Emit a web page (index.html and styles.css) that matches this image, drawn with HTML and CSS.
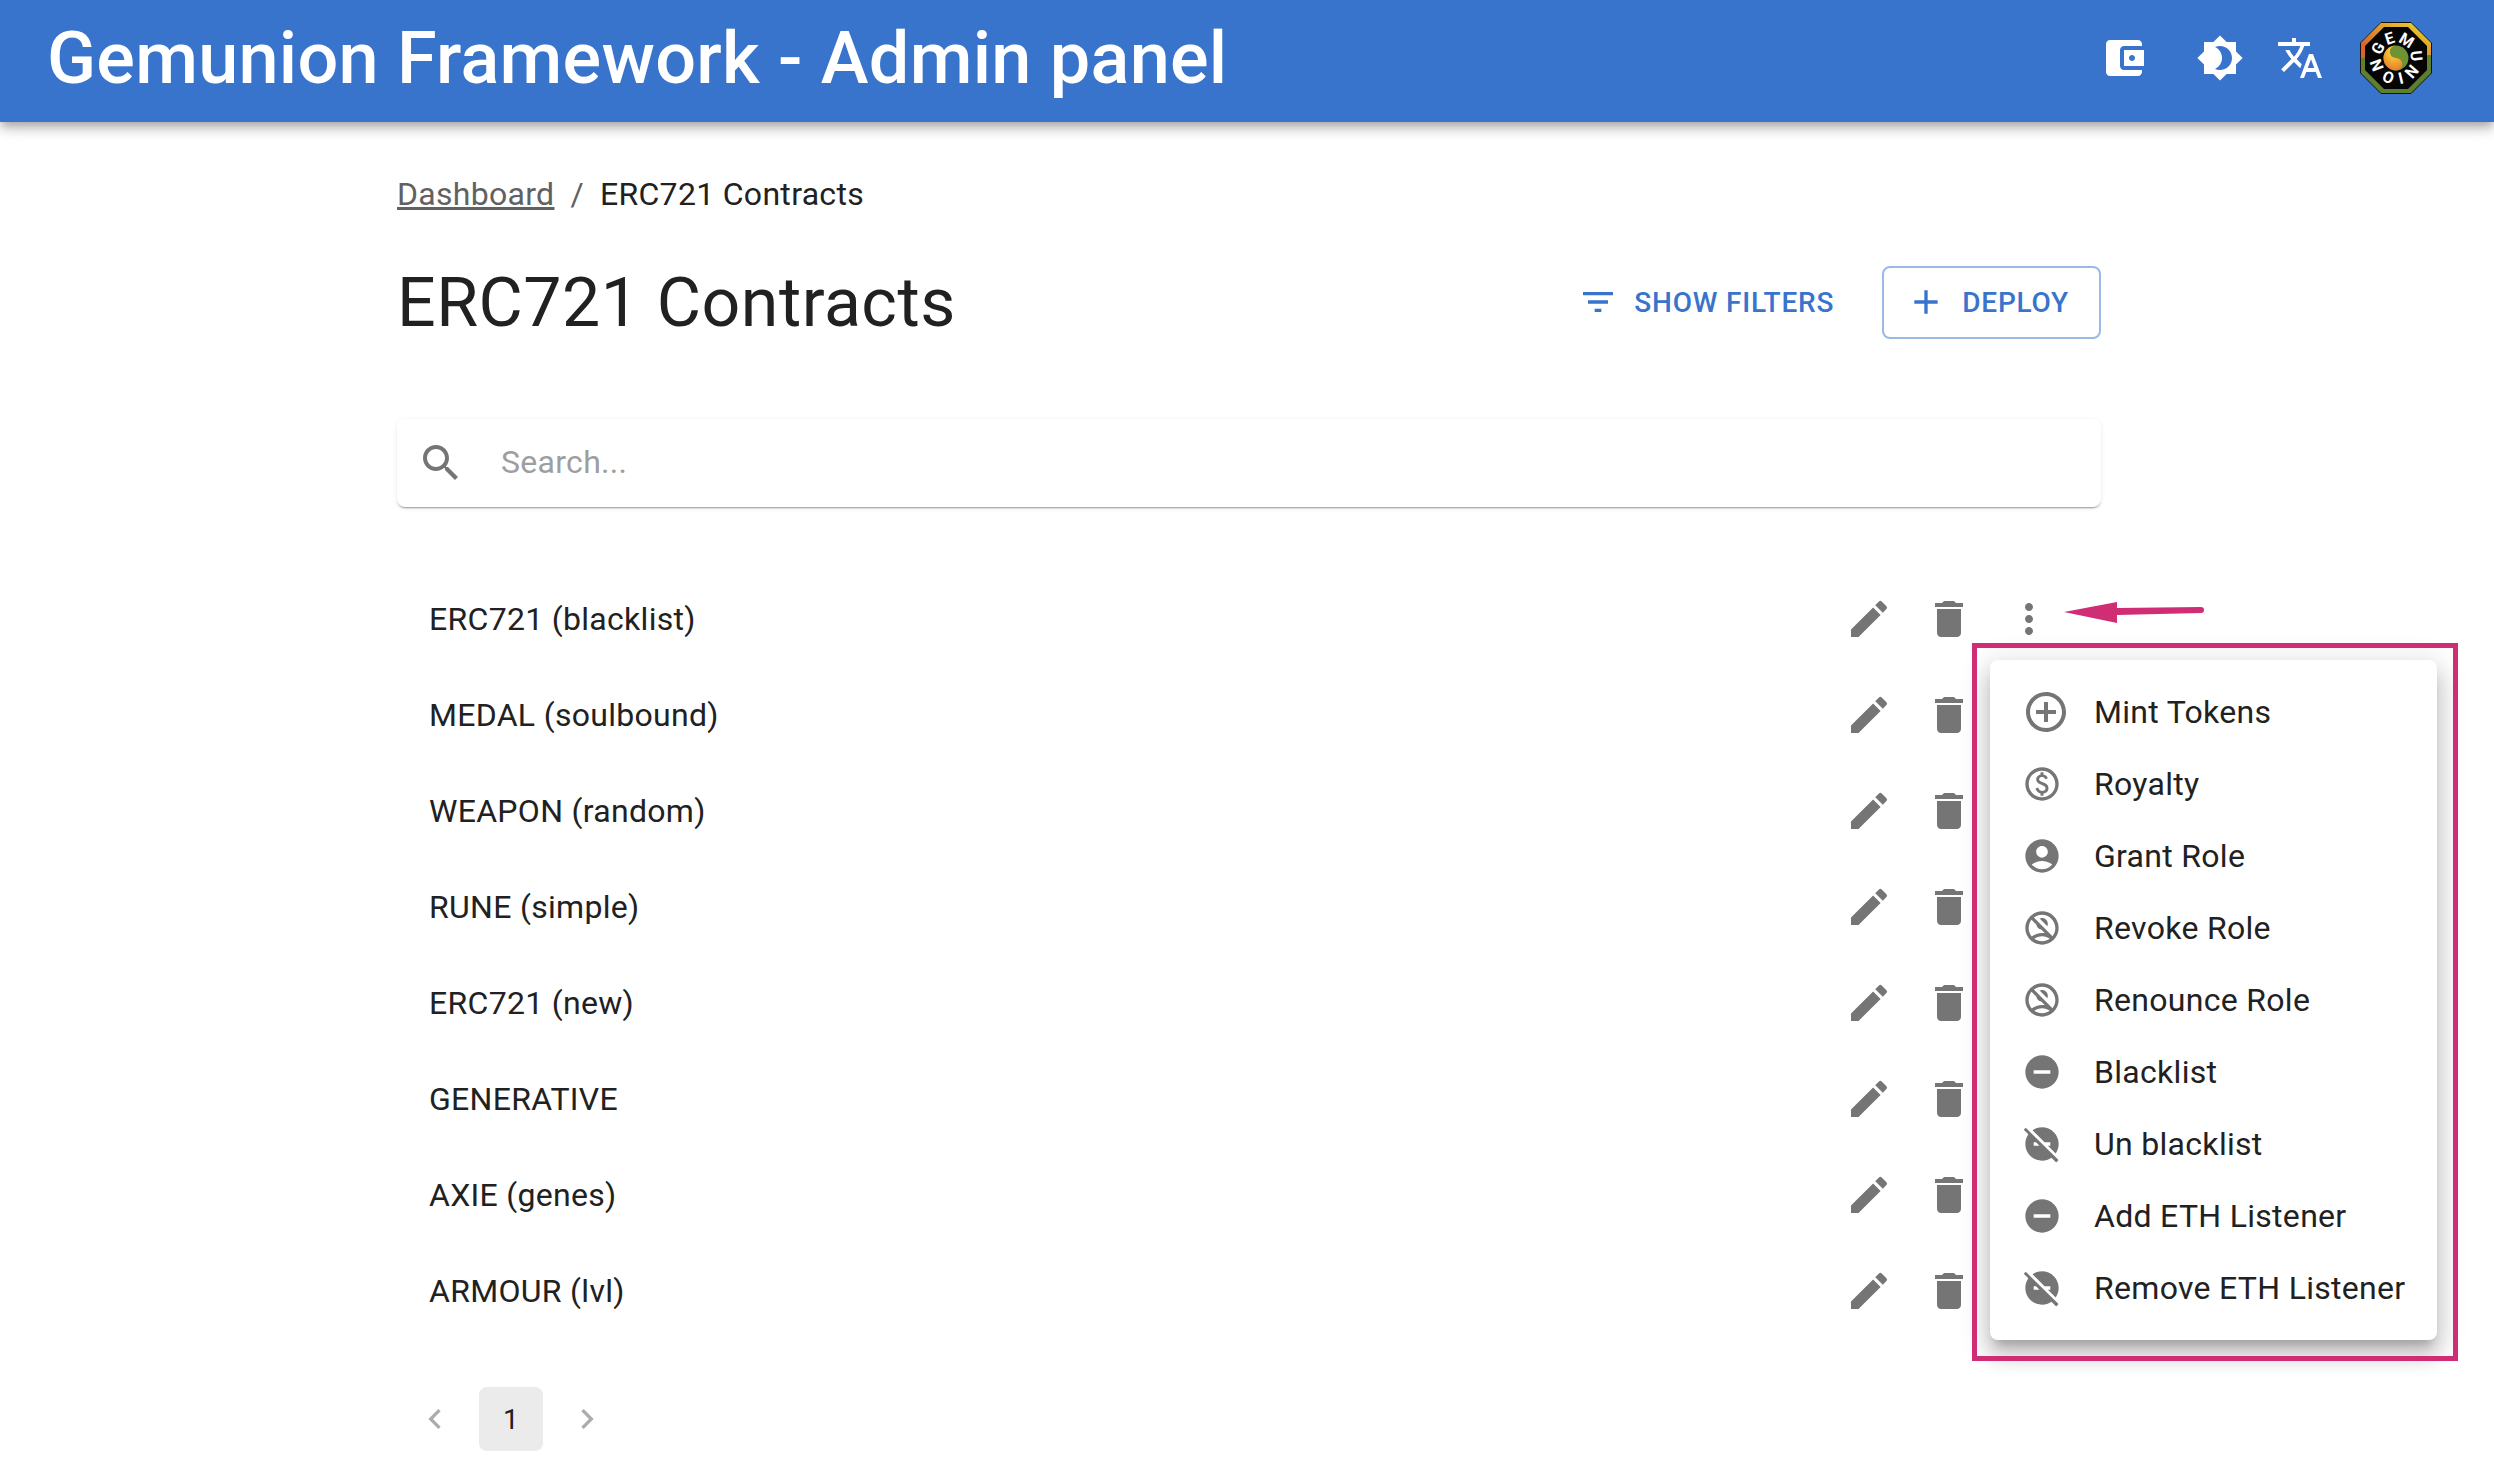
FILE: index.html
```html
<!DOCTYPE html>
<html lang="en">
<head>
  <meta charset="UTF-8" />
  <title>Gemunion Framework - Admin panel</title>
  <link rel="stylesheet" href="styles.css">
</head>
<body>
  <!--ICONS-->
  <svg class="sprites" width="0" height="0">
    <symbol id="i-wallet" viewBox="0 0 24 24"><path d="M21 18v1c0 1.1-.9 2-2 2H5c-1.11 0-2-.9-2-2V5c0-1.1.89-2 2-2h14c1.1 0 2 .9 2 2v1h-9c-1.11 0-2 .9-2 2v8c0 1.1.89 2 2 2h9zm-9-2h10V8H12v8zm4-2.5c-.83 0-1.5-.67-1.5-1.5s.67-1.5 1.5-1.5 1.5.67 1.5 1.5-.67 1.5-1.5 1.5z"/></symbol>
    <symbol id="i-theme" viewBox="0 0 24 24"><path d="M20 8.69V4h-4.69L12 .69 8.69 4H4v4.69L.69 12 4 15.31V20h4.69L12 23.31 15.31 20H20v-4.69L23.31 12 20 8.69zM12 18c-.89 0-1.74-.2-2.5-.55C11.56 16.5 13 14.42 13 12s-1.44-4.5-3.5-5.45C10.26 6.2 11.11 6 12 6c3.31 0 6 2.69 6 6s-2.69 6-6 6z"/></symbol>
    <symbol id="i-translate" viewBox="0 0 24 24"><path d="m12.87 15.07-2.54-2.51.03-.03c1.74-1.94 2.98-4.17 3.71-6.53H17V4h-7V2H8v2H1v1.99h11.17C11.5 7.92 10.44 9.75 9 11.35 8.07 10.32 7.3 9.19 6.69 8h-2c.73 1.63 1.73 3.17 2.98 4.56l-5.09 5.02L4 19l5-5 3.11 3.11.76-2.04zM18.5 10h-2L12 22h2l1.12-3h4.75L21 22h2l-4.5-12zm-2.62 7 1.62-4.33L19.12 17h-3.24z"/></symbol>
    <symbol id="i-filter" viewBox="0 0 24 24"><path d="M10 18h4v-2h-4v2zM3 6v2h18V6H3zm3 7h12v-2H6v2z"/></symbol>
    <symbol id="i-add" viewBox="0 0 24 24"><path d="M19 13h-6v6h-2v-6H5v-2h6V5h2v6h6v2z"/></symbol>
    <symbol id="i-search" viewBox="0 0 24 24"><path d="M15.5 14h-.79l-.28-.27C15.41 12.59 16 11.11 16 9.5 16 5.91 13.09 3 9.5 3S3 5.91 3 9.5 5.91 16 9.5 16c1.61 0 3.09-.59 4.23-1.57l.27.28v.79l5 4.99L20.49 19l-4.99-5zm-6 0C7.01 14 5 11.99 5 9.5S7.01 5 9.5 5 14 7.01 14 9.5 11.99 14 9.5 14z"/></symbol>
    <symbol id="i-edit" viewBox="0 0 24 24"><path d="M3 17.25V21h3.75L17.81 9.94l-3.75-3.75L3 17.25zM20.71 7.04c.39-.39.39-1.02 0-1.41l-2.34-2.34a.9959.9959 0 0 0-1.41 0l-1.83 1.83 3.75 3.75 1.83-1.83z"/></symbol>
    <symbol id="i-delete" viewBox="0 0 24 24"><path d="M6 19c0 1.1.9 2 2 2h8c1.1 0 2-.9 2-2V7H6v12zM19 4h-3.5l-1-1h-5l-1 1H5v2h14V4z"/></symbol>
    <symbol id="i-more" viewBox="0 0 24 24"><path d="M12 8c1.1 0 2-.9 2-2s-.9-2-2-2-2 .9-2 2 .9 2 2 2zm0 2c-1.1 0-2 .9-2 2s.9 2 2 2 2-.9 2-2-.9-2-2-2zm0 6c-1.1 0-2 .9-2 2s.9 2 2 2 2-.9 2-2-.9-2-2-2z"/></symbol>
    <symbol id="i-mint" viewBox="0 0 24 24"><path d="M13 7h-2v4H7v2h4v4h2v-4h4v-2h-4V7zm-1-5C6.48 2 2 6.48 2 12s4.48 10 10 10 10-4.48 10-10S17.52 2 12 2zm0 18c-4.41 0-8-3.59-8-8s3.59-8 8-8 8 3.59 8 8-3.59 8-8 8z"/></symbol>
    <symbol id="i-paid" viewBox="0 0 24 24"><path d="M12 2C6.48 2 2 6.48 2 12s4.48 10 10 10 10-4.48 10-10S17.52 2 12 2zm0 18c-4.41 0-8-3.59-8-8s3.59-8 8-8 8 3.59 8 8-3.59 8-8 8z"/><path d="M12.89 11.1c-1.78-.59-2.64-.96-2.64-1.9 0-1.02 1.11-1.39 1.81-1.39 1.31 0 1.79.99 1.9 1.34l1.58-.67c-.15-.44-.82-1.91-2.66-2.23V5h-1.75v1.26c-2.6.56-2.62 2.85-2.62 2.96 0 2.27 2.25 2.91 3.35 3.31 1.58.56 2.28 1.07 2.28 2.03 0 1.13-1.05 1.61-1.98 1.61-1.82 0-2.34-1.87-2.4-2.09l-1.66.67c.63 2.19 2.28 2.78 3.02 2.96V19h1.75v-1.24c.52-.09 3.02-.59 3.02-3.22.01-1.39-.62-2.61-3-3.44z"/></symbol>
    <symbol id="i-account" viewBox="0 0 24 24"><path d="M12 2C6.48 2 2 6.48 2 12s4.48 10 10 10 10-4.48 10-10S17.52 2 12 2zm0 4c1.93 0 3.5 1.57 3.5 3.5S13.93 13 12 13s-3.5-1.57-3.5-3.5S10.07 6 12 6zm0 14c-2.03 0-4.43-.82-6.14-2.88C7.55 15.8 9.68 15 12 15s4.45.8 6.14 2.12C16.43 19.18 14.03 20 12 20z"/></symbol>
    <symbol id="i-noaccount" viewBox="0 0 24 24"><path d="M15.18 10.94c.2-.44.32-.92.32-1.44C15.5 7.57 13.93 6 12 6c-.52 0-1 .12-1.44.32l4.62 4.62z"/><path d="M12 2C6.48 2 2 6.48 2 12s4.48 10 10 10 10-4.48 10-10S17.52 2 12 2zM4 12c0-1.85.63-3.55 1.69-4.9l2.86 2.86c.21 1.56 1.43 2.79 2.99 2.99l2.2 2.2c-.57-.1-1.15-.15-1.74-.15-2.32 0-4.45.8-6.14 2.12C4.7 15.73 4 13.95 4 12zm8 8c-1.74 0-3.34-.56-4.65-1.5C8.66 17.56 10.26 17 12 17s3.34.56 4.65 1.5c-1.31.94-2.91 1.5-4.65 1.5zm6.31-3.1L7.1 5.69C8.45 4.63 10.15 4 12 4c4.42 0 8 3.58 8 8 0 1.85-.63 3.55-1.69 4.9z"/></symbol>
    <symbol id="i-minus" viewBox="0 0 24 24"><path d="M12 2C6.48 2 2 6.48 2 12s4.48 10 10 10 10-4.48 10-10S17.52 2 12 2zm5 11H7v-2h10v2z"/></symbol>
    <symbol id="i-minusoff" viewBox="0 0 24 24"><path d="M17 11v2h-1.46l4.68 4.68C21.34 16.07 22 14.11 22 12c0-5.52-4.48-10-10-10-2.11 0-4.07.66-5.68 1.78L13.54 11H17zM2.27 2.27 1.06 3.48l2.72 2.72C2.66 7.93 2 9.89 2 12c0 5.52 4.48 10 10 10 2.11 0 4.07-.66 5.68-1.78l2.84 2.84 1.41-1.41L2.27 2.27zM7 13v-2h1.46l2 2H7z"/></symbol>
    <symbol id="i-prev" viewBox="0 0 24 24"><path d="M15.41 7.41 14 6l-6 6 6 6 1.41-1.41L10.83 12z"/></symbol>
    <symbol id="i-next" viewBox="0 0 24 24"><path d="M10 6 8.59 7.41 13.17 12l-4.58 4.59L10 18l6-6z"/></symbol>
  </svg>

  <header class="appbar">
    <div class="appbar-title">Gemunion Framework - Admin panel</div>
    <svg class="icon wallet"><use href="#i-wallet"/></svg>
    <svg class="icon theme"><use href="#i-theme"/></svg>
    <svg class="icon translate"><use href="#i-translate"/></svg>
    <!--AVATAR-->
    <svg class="avatar" viewBox="0 0 72 72">
      <defs>
        <linearGradient id="ring" x1="0" y1="1" x2="1" y2="0">
          <stop offset="0.2" stop-color="#d9642a"/>
          <stop offset="0.85" stop-color="#e6c52e"/>
        </linearGradient>
        <radialGradient id="yang" cx="0.55" cy="0.2" r="0.85">
          <stop offset="0" stop-color="#ffe13a"/>
          <stop offset="1" stop-color="#e8782a"/>
        </radialGradient>
        <path id="letters" d="M21 36a15 15 0 1 1 30 0a15 15 0 1 1 -30 0"/>
      </defs>
      <polygon points="21,.5 51,.5 71.5,21 71.5,51 51,71.5 21,71.5 .5,51 .5,21" fill="#5d7f2e" stroke="#111"/>
      <polygon points="21,1 51,1 71,21 71,33 1,36 1,21" fill="url(#ring)"/>
      <polygon points="24,5 48,5 67,24 67,48 48,67 24,67 5,48 5,24" fill="#050505"/>
      <circle cx="36" cy="36" r="12.5" fill="#6f9332"/>
      <path d="M36 23.5a12.5 12.5 0 0 0 0 25a6.25 6.25 0 0 0 0-12.5a6.25 6.25 0 0 1 0-12.5z" fill="url(#yang)"/>
      <circle cx="36" cy="29.8" r="1.5" fill="#6f9332"/>
      <circle cx="36" cy="42.2" r="1.5" fill="#e8a02a"/>
      <text class="avatar-text"><textPath href="#letters" startOffset="2" textLength="92">GEMUNION</textPath></text>
    </svg>
  </header>

  <main class="page">
    <nav class="crumbs">
      <a href="#">Dashboard</a>
      <span class="crumb-sep">/</span>
      <span>ERC721 Contracts</span>
    </nav>

    <div class="title-row">
      <h1>ERC721 Contracts</h1>
      <button class="btn btn-text"><svg class="btn-icon"><use href="#i-filter"/></svg>Show filters</button>
      <button class="btn btn-outlined"><svg class="btn-icon"><use href="#i-add"/></svg>Deploy</button>
    </div>

    <div class="search">
      <svg class="icon"><use href="#i-search"/></svg>
      <span class="search-text">Search...</span>
    </div>

    <ul class="contracts">
      <li><span>ERC721 (blacklist)</span><div class="actions"><svg class="icon"><use href="#i-edit"/></svg><svg class="icon"><use href="#i-delete"/></svg><svg class="icon"><use href="#i-more"/></svg></div></li>
      <li><span>MEDAL (soulbound)</span><div class="actions"><svg class="icon"><use href="#i-edit"/></svg><svg class="icon"><use href="#i-delete"/></svg><svg class="icon"><use href="#i-more"/></svg></div></li>
      <li><span>WEAPON (random)</span><div class="actions"><svg class="icon"><use href="#i-edit"/></svg><svg class="icon"><use href="#i-delete"/></svg><svg class="icon"><use href="#i-more"/></svg></div></li>
      <li><span>RUNE (simple)</span><div class="actions"><svg class="icon"><use href="#i-edit"/></svg><svg class="icon"><use href="#i-delete"/></svg><svg class="icon"><use href="#i-more"/></svg></div></li>
      <li><span>ERC721 (new)</span><div class="actions"><svg class="icon"><use href="#i-edit"/></svg><svg class="icon"><use href="#i-delete"/></svg><svg class="icon"><use href="#i-more"/></svg></div></li>
      <li><span>GENERATIVE</span><div class="actions"><svg class="icon"><use href="#i-edit"/></svg><svg class="icon"><use href="#i-delete"/></svg><svg class="icon"><use href="#i-more"/></svg></div></li>
      <li><span>AXIE (genes)</span><div class="actions"><svg class="icon"><use href="#i-edit"/></svg><svg class="icon"><use href="#i-delete"/></svg><svg class="icon"><use href="#i-more"/></svg></div></li>
      <li><span>ARMOUR (lvl)</span><div class="actions"><svg class="icon"><use href="#i-edit"/></svg><svg class="icon"><use href="#i-delete"/></svg><svg class="icon"><use href="#i-more"/></svg></div></li>
    </ul>

    <div class="pager">
      <span class="pager-btn"><svg class="pager-icon"><use href="#i-prev"/></svg></span>
      <span class="pager-btn current">1</span>
      <span class="pager-btn"><svg class="pager-icon"><use href="#i-next"/></svg></span>
    </div>
  </main>

  <!--MENU + MARKS DRAWN OVER THE SCREENSHOT-->
  <ul class="menu">
    <li><svg class="icon"><use href="#i-mint"/></svg><span>Mint Tokens</span></li>
    <li><svg class="icon-sm"><use href="#i-paid"/></svg><span>Royalty</span></li>
    <li><svg class="icon-sm"><use href="#i-account"/></svg><span>Grant Role</span></li>
    <li><svg class="icon-sm"><use href="#i-noaccount"/></svg><span>Revoke Role</span></li>
    <li><svg class="icon-sm"><use href="#i-noaccount"/></svg><span>Renounce Role</span></li>
    <li><svg class="icon-sm"><use href="#i-minus"/></svg><span>Blacklist</span></li>
    <li><svg class="icon-sm"><use href="#i-minusoff"/></svg><span>Un blacklist</span></li>
    <li><svg class="icon-sm"><use href="#i-minus"/></svg><span>Add ETH Listener</span></li>
    <li><svg class="icon-sm"><use href="#i-minusoff"/></svg><span>Remove ETH Listener</span></li>
  </ul>
  <div class="mark-box"></div>
  <svg class="mark-arrow" viewBox="0 0 140 22">
    <path d="M0 11 53 1 53 7 137 6a3 3 0 0 1 0 6L53 14 53 22z"/>
  </svg>
</body>
</html>
```

FILE: styles.css
```css
:root {
  --azul: #3874cb;
  --cinza: #757575;
  --texto: #212121;
  --marca: #cf2e75;
}

* {
  margin: 0;
  padding: 0;
  box-sizing: border-box;
}

html, body {
  height: 100%;
  overflow: hidden;
}

body {
  position: relative;
  font-family: 'Roboto', sans-serif;
  font-size: 32px;
  letter-spacing: 0.3px;
  color: var(--texto);
  background-color: #fff;
}

ul {
  list-style: none;
}

.sprites {
  position: absolute;
}

.icon {
  width: 48px;
  height: 48px;
  fill: var(--cinza);
  flex: none;
}

.icon-sm {
  width: 40px;
  height: 40px;
  fill: var(--cinza);
  flex: none;
}

/* top bar */
.appbar {
  height: 122px;
  padding: 0 62px 6px 47px;
  display: flex;
  align-items: center;
  background-color: var(--azul);
  box-shadow: 0 4px 8px -2px rgba(0, 0, 0, 0.2), 0 8px 10px 0 rgba(0, 0, 0, 0.14), 0 2px 20px 0 rgba(0, 0, 0, 0.12);
}

.appbar-title {
  flex: 1;
  font-size: 72px;
  font-weight: 500;
  letter-spacing: 0.27px;
  color: #fff;
}

.appbar .icon {
  fill: #fff;
}

.appbar .theme {
  margin-left: 48px;
}

.appbar .translate {
  margin-left: 32px;
}

.avatar {
  width: 72px;
  height: 72px;
  margin-left: 36px;
}

.avatar-text {
  font-family: 'Roboto', sans-serif;
  font-size: 16px;
  font-weight: 700;
  letter-spacing: 0;
  fill: #fff;
}

/* page */
.page {
  width: 1704px;
  margin-left: 397px;
  padding-top: 48px;
}

.crumbs {
  display: flex;
  line-height: 48px;
  color: #616161;
}

.crumbs a {
  color: #616161;
}

.crumbs span:last-child {
  color: var(--texto);
}

.crumb-sep {
  margin: 0 16px;
}

.title-row {
  height: 80px;
  margin-top: 44px;
  display: flex;
  align-items: center;
}

h1 {
  flex: 1;
  padding-top: 2px;
  font-size: 68px;
  font-weight: 400;
  letter-spacing: 0.5px;
}

.btn {
  height: 73px;
  display: flex;
  align-items: center;
  border: 2px solid transparent;
  border-radius: 8px;
  background: none;
  font-family: 'Roboto', sans-serif;
  font-size: 28px;
  font-weight: 500;
  letter-spacing: 0.8px;
  text-transform: uppercase;
  color: var(--azul);
}

.btn-icon {
  width: 40px;
  height: 40px;
  margin-right: 16px;
  fill: var(--azul);
}

.btn-text {
  padding: 0 30px 0 20px;
  margin-right: 16px;
}

.btn-outlined {
  padding: 0 30px 0 22px;
  border-color: #9bb9e5;
}

.search {
  height: 88px;
  margin-top: 77px;
  padding-left: 20px;
  display: flex;
  align-items: center;
  border-radius: 8px;
  box-shadow: 0 2px 2px -1px rgba(0, 0, 0, 0.4), 0 1px 6px 0 rgba(0, 0, 0, 0.06);
}

.search-text {
  margin-left: 36px;
  padding-bottom: 2px;
  color: #9e9e9e;
}

.contracts {
  margin-top: 64px;
}

.contracts li {
  height: 96px;
  padding: 0 48px 0 32px;
  display: flex;
  align-items: center;
}

.actions {
  margin-left: auto;
  display: flex;
  gap: 32px;
}

.pager {
  margin-top: 48px;
  padding-left: 6px;
  display: flex;
  gap: 12px;
}

.pager-btn {
  width: 64px;
  height: 64px;
  display: flex;
  align-items: center;
  justify-content: center;
  border-radius: 8px;
  font-size: 28px;
}

.pager-btn.current {
  background-color: #ebebeb;
}

.pager-icon {
  width: 40px;
  height: 40px;
  fill: #acacac;
}

/* popup menu */
.menu {
  position: absolute;
  left: 1990px;
  top: 660px;
  padding: 16px 0;
  background-color: #fff;
  border-radius: 8px;
  box-shadow: 0 10px 10px -6px rgba(0, 0, 0, 0.2), 0 16px 20px 2px rgba(0, 0, 0, 0.14), 0 6px 28px 6px rgba(0, 0, 0, 0.12);
}

.menu li {
  height: 72px;
  padding: 0 32px;
  display: flex;
  align-items: center;
  white-space: nowrap;
}

.menu li svg {
  margin-right: 32px;
}

.menu li .icon {
  margin-right: 24px;
}

.mark-box {
  position: absolute;
  left: 1972px;
  top: 643px;
  width: 486px;
  height: 718px;
  border: 5px solid var(--marca);
}

.mark-arrow {
  position: absolute;
  left: 2064px;
  top: 601px;
  width: 140px;
  height: 22px;
  fill: var(--marca);
}
```
